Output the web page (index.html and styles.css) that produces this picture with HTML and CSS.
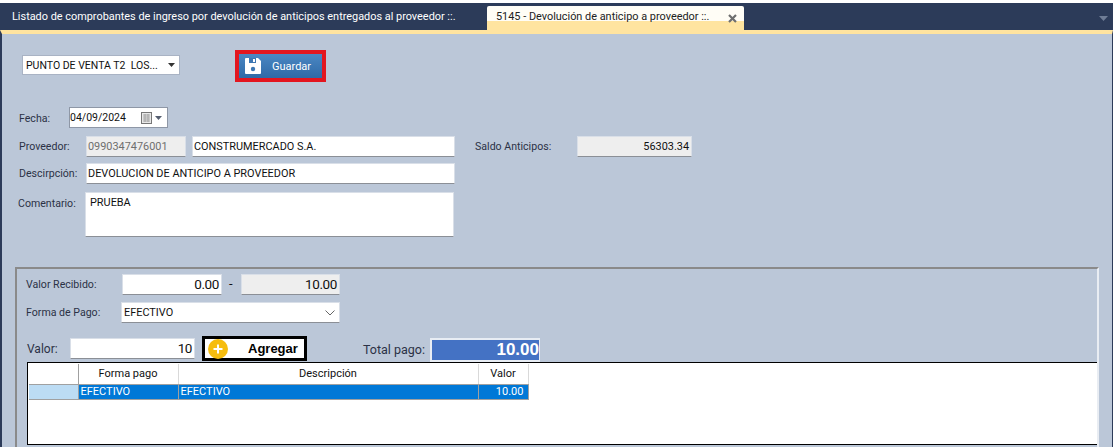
FILE: index.html
```html
<!DOCTYPE html>
<html lang="es">
<head>
<meta charset="utf-8">
<title>Devolución de anticipo a proveedor</title>
<link rel="stylesheet" href="styles.css">
</head>
<body>
<div class="app">
  <div class="tabs">
    <div class="tab">Listado de comprobantes de ingreso por devolución de anticipos entregados al proveedor ::.</div>
    <div class="tab tab-active">
      <span>5145 - Devolución de anticipo a proveedor ::.</span>
      <svg class="tab-close" width="9" height="9" viewBox="0 0 9 9"><path d="M1 1l7 7M8 1l-7 7" stroke="#6e6e6e" stroke-width="2.2"/></svg>
    </div>
    <svg class="tab-menu" width="9" height="5" viewBox="0 0 9 5"><path d="M0 0h9L4.500 5z" fill="#6f7d96"/></svg>
  </div>
  <div class="panel">
    <div class="toolbar">
      <div class="branch">
        <span>PUNTO DE VENTA T2&nbsp; LOS...</span>
        <svg width="7" height="4" viewBox="0 0 7 4"><path d="M0 0h7L3.500 4z" fill="#333"/></svg>
      </div>
      <div class="save-outline">
        <div class="save">
          <svg width="16" height="16" viewBox="0 0 16 16"><path d="M1 0h12l3 3v12a1 1 0 0 1-1 1H1a1 1 0 0 1-1-1V1a1 1 0 0 1 1-1z" fill="#fff"/><rect x="4" y="0" width="7" height="5" fill="#3d77b3"/><rect x="8" y="1" width="2" height="3" fill="#fff"/><circle cx="8" cy="11" r="2.200" fill="#3d77b3"/></svg>
          <span>Guardar</span>
        </div>
      </div>
    </div>

    <div class="row row-date">
      <span class="label label-date">Fecha:</span>
      <div class="box date">
        <span>04/09/2024</span>
        <span class="date-tools">
          <svg width="12" height="12" viewBox="0 0 12 12"><rect x=".5" y=".5" width="10" height="11" fill="#e8e8e8" stroke="#777"/><path d="M2 3h7M2 5h7M2 7h7M2 9h7M4 2v8M7 2v8" stroke="#999" stroke-width=".8"/></svg>
          <svg width="7" height="4" viewBox="0 0 7 4"><path d="M0 0h7L3.500 4z" fill="#555e70"/></svg>
        </span>
      </div>
    </div>

    <div class="row row-supplier">
      <span class="label label-wide">Proveedor:</span>
      <div class="box box-ruc">0990347476001</div>
      <div class="box box-name">CONSTRUMERCADO S.A.</div>
      <span class="label label-balance">Saldo Anticipos:</span>
      <div class="box box-balance">56303.34</div>
    </div>

    <div class="row row-desc">
      <span class="label label-wide">Descirpción:</span>
      <div class="box box-desc">DEVOLUCION DE ANTICIPO A PROVEEDOR</div>
    </div>

    <div class="row row-comment">
      <span class="label label-comment">Comentario:</span>
      <div class="box box-comment">PRUEBA</div>
    </div>

    <div class="group">
      <div class="row row-received">
        <span class="label label-received">Valor Recibido:</span>
        <div class="box num box-received">0.00</div>
        <span class="dash">-</span>
        <div class="box num box-pending">10.00</div>
      </div>
      <div class="row row-method">
        <span class="label label-method">Forma de Pago:</span>
        <div class="box box-method">
          <span>EFECTIVO</span>
          <svg width="10" height="6" viewBox="0 0 10 6"><path d="M.5.500L5 5 9.500.500" fill="none" stroke="#666"/></svg>
        </div>
      </div>
      <div class="row row-add">
        <span class="label label-value">Valor:</span>
        <div class="box num box-value">10</div>
        <div class="add">
          <svg width="20" height="20" viewBox="0 0 20 20"><circle cx="10" cy="10" r="10" fill="#f6bd0f"/><path d="M10 5.500v9M5.500 10h9" stroke="#fff" stroke-width="2"/></svg>
          <span>Agregar</span>
        </div>
        <span class="label label-total">Total pago:</span>
        <div class="total">10.00</div>
      </div>
      <div class="grid">
        <table>
          <colgroup>
            <col class="col-head"><col class="col-method"><col class="col-desc"><col class="col-value">
          </colgroup>
          <thead>
            <tr><th></th><th>Forma pago</th><th>Descripción</th><th>Valor</th></tr>
          </thead>
          <tbody>
            <tr><td class="row-head"></td><td>EFECTIVO</td><td>EFECTIVO</td><td class="cell-num">10.00</td></tr>
          </tbody>
        </table>
      </div>
    </div>
  </div>
</div>
</body>
</html>
```
FILE: styles.css
```css
* { box-sizing: border-box; }
html, body { margin: 0; height: 100%; }
body {
  background: #fff;
  color: #111;
  font-family: Roboto, "Liberation Sans", Arial, sans-serif;
  font-size: 11px;
  overflow: hidden;
}
.app {
  height: 447px;
  padding-top: 3px;
  display: flex;
  flex-direction: column;
}
.tabs {
  height: 27px;
  background: #2c3b59;
  display: flex;
  align-items: flex-end;
  flex: none;
  position: relative;
}
.tab {
  color: #fff;
  width: 487px;
  height: 24px;
  padding: 4px 0 0 12px;
  white-space: nowrap;
  font-size: 10.900px;
}
.tab-active {
  width: 257px;
  color: #222;
  padding-left: 9px;
  border-radius: 2px 2px 0 0;
  background: linear-gradient(#fffdf6 0, #fffdf6 15px, #ffe4a0 15px, #ffe4a0 100%);
  display: flex;
  align-items: flex-start;
}
.tab-close { margin: 4px 7px 0 auto; }
.tab-menu { position: absolute; right: 5px; top: 13px; }
.panel {
  flex: 1;
  min-height: 0;
  background: #bbc7d8;
  border-top: 4px solid #ffe4a0;
  border-left: 2px solid #2c3b59;
  border-right: 1px solid #2c3b59;
  display: flex;
  flex-direction: column;
}
.toolbar {
  display: flex;
  align-items: flex-start;
  margin: 16px 0 0 20px;
}
.branch {
  width: 158px;
  height: 20px;
  margin-top: 5px;
  padding: 0 4px 0 3px;
  background: #fff;
  border: 1px solid #a9b3c4;
  display: flex;
  align-items: center;
  justify-content: space-between;
  white-space: nowrap;
  font-size: 10.500px;
}
.branch svg { flex: none; }
.save-outline {
  margin-left: 55px;
  width: 91px;
  height: 32px;
  border: 4px solid #e3161f;
}
.save {
  height: 100%;
  background: linear-gradient(#4b87c3, #2f6aa7);
  color: #fff;
  display: flex;
  align-items: center;
  padding-left: 6px;
  gap: 11px;
}
.row { display: flex; align-items: flex-start; }
.row-date { margin: 25px 0 0 17px; height: 21px; }
.row-supplier { margin: 8px 0 0 17px; }
.row-desc { margin: 6px 0 0 17px; }
.row-comment { margin: 8px 0 0 16px; }
.label {
  color: #2b3246;
  font-size: 10.600px;
  line-height: 21px;
  white-space: nowrap;
  flex: none;
}
.label-date { width: 50px; line-height: 23px; }
.label-wide { width: 67px; }
.label-comment { width: 67px; line-height: 23px; }
.box {
  height: 21px;
  flex: none;
  background: #fff;
  border: 1px solid #d9dfe8;
  border-bottom-color: #8b8f96;
  padding: 0 1px;
  line-height: 19px;
  white-space: nowrap;
  font-size: 10.900px;
}
.date {
  width: 99px;
  border: 1px solid #8e97a6;
  display: flex;
  align-items: center;
  justify-content: space-between;
  font-size: 10.500px;
  padding: 0 5px 0 0;
}
.date-tools { display: flex; align-items: center; gap: 2px; }
.box-ruc { width: 100px; background: #eeeeee; color: #6f6f6f; }
.box-name { width: 263px; margin-left: 6px; }
.label-balance { margin-left: 20px; width: 102px; }
.box-balance { width: 115px; background: #eeeeee; text-align: right; padding-right: 2px; }
.box-desc { width: 369px; }
.box-comment { width: 369px; height: 45px; padding: 3px 4px; line-height: 14px; }
.group {
  flex: 1;
  min-height: 0;
  margin: 30px 13px 0 13px;
  border-top: 2px solid #8a8a8a;
  border-left: 2px solid #8a8a8a;
  border-right: 2px solid #e9edf3;
  display: flex;
  flex-direction: column;
}
.row-received { margin: 5px 0 0 9px; }
.label-received { width: 96px; }
.num { text-align: right; font-size: 13.500px; letter-spacing: -.4px; padding-right: 2px; }
.box-received { width: 100px; }
.dash { width: 19px; padding-left: 7px; line-height: 19px; font-size: 13px; }
.box-pending { width: 99px; background: #eeeeee; }
.row-method { margin: 7px 0 0 9px; }
.label-method { width: 95px; }
.box-method {
  width: 219px;
  display: flex;
  align-items: center;
  justify-content: space-between;
  padding: 0 4px 0 2px;
}
.row-add { margin: 13px 0 0 10px; height: 26px; }
.label-value { width: 43px; margin-top: 3px; font-size: 12px; }
.box-value { width: 125px; margin-top: 2px; }
.add {
  width: 105px;
  height: 25px;
  margin-left: 7px;
  flex: none;
  background: #fff;
  border: 3px solid #000;
  display: flex;
  align-items: center;
  padding-left: 3px;
  gap: 20px;
  color: #000;
  font-family: "Liberation Sans", Arial, sans-serif;
  font-weight: bold;
  font-size: 13px;
}
.label-total { margin: 3px 0 0 56px; width: 67px; font-size: 12.500px; }
.total {
  width: 110px;
  height: 24px;
  margin-top: 2px;
  flex: none;
  background: #4472c4;
  border: 2px solid #e8edf4;
  border-right-width: 1px;
  color: #fff;
  font-family: "Liberation Sans", Arial, sans-serif;
  font-size: 17px;
  font-weight: bold;
  line-height: 20px;
  text-align: right;
}
.grid {
  margin-left: 10px;
  height: 83px;
  flex: none;
  background: #fff;
  border: 1px solid #000;
  border-right: 0;
  padding: 1px 0 0 1px;
}
table {
  border-collapse: collapse;
  table-layout: fixed;
  width: 499px;
}
.col-head { width: 49px; }
.col-method { width: 100px; }
.col-desc { width: 300px; }
.col-value { width: 50px; }
th {
  height: 20px;
  padding: 0;
  font-weight: normal;
  text-align: center;
  border-right: 1px solid #d9d9d9;
  border-bottom: 1px solid #a0a0a0;
}
th:first-child { border-right-color: #a0a0a0; }
td {
  height: 15px;
  padding: 0 0 0 2px;
  background: #0078d7;
  color: #fff;
  line-height: 14px;
  border-right: 1px solid #a0a0a0;
  border-bottom: 1px solid #a0a0a0;
  white-space: nowrap;
}
td.row-head { background: #bcdcf4; }
td.cell-num { text-align: right; padding: 0 4px 0 0; }
```
